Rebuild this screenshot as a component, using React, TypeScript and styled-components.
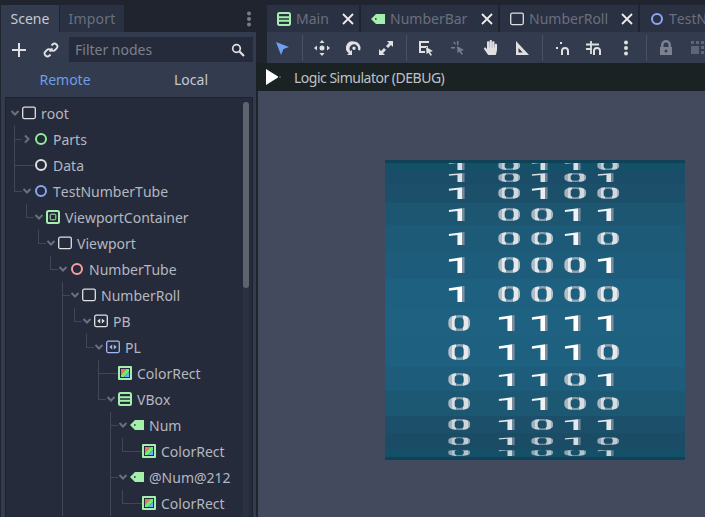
import React from "react";
import styled, { createGlobalStyle } from "styled-components";
import { FaHandPaper } from "react-icons/fa";

const GlobalStyle = createGlobalStyle`
  html, body {
    margin: 0;
    height: 100%;
    overflow: hidden;
    background: #20242f;
  }
  #root { height: 100%; }
`;

const Editor = styled.div`
  display: flex;
  width: 705px;
  height: 517px;
  overflow: hidden;
  font-family: "Noto Sans", sans-serif;
  font-size: 14px;
  color: #c6c9d0;
`;

const Dock = styled.div`
  width: 255px;
  margin-left: 1px;
  flex: none;
  display: flex;
  flex-direction: column;
`;

const DockTabs = styled.div`
  height: 32px;
  padding-top: 5px;
  box-sizing: border-box;
  display: flex;
  align-items: stretch;
  gap: 1px;
`;

const DockTab = styled.div<{ $active?: boolean }>`
  width: ${(p) => (p.$active ? "58px" : "64px")};
  display: flex;
  align-items: center;
  justify-content: center;
  background: ${(p) => (p.$active ? "#333b4f" : "#2a3142")};
  color: ${(p) => (p.$active ? "#c6c9d0" : "#6a6f7e")};
  letter-spacing: ${(p) => (p.$active ? "0" : "0.2px")};
`;

const DockMenu = styled.div`
  margin-left: auto;
  margin-right: 2px;
  width: 10px;
  display: flex;
  align-items: center;
  justify-content: center;
`;

const DockBody = styled.div`
  flex: 1;
  min-height: 0;
  background: #333b4f;
  display: flex;
  flex-direction: column;
`;

const SearchRow = styled.div`
  height: 25px;
  margin-top: 5px;
  padding-left: 10px;
  display: flex;
  align-items: center;
`;

const PlainIcon = styled.div<{ $gap: number }>`
  width: 16px;
  margin-right: ${(p) => p.$gap}px;
  flex: none;
  display: flex;
  align-items: center;
  justify-content: center;
`;

const FilterBox = styled.div`
  width: 184px;
  height: 25px;
  padding: 0 8px 0 6px;
  box-sizing: border-box;
  background: #252b3a;
  color: #7b808e;
  display: flex;
  align-items: center;
  justify-content: space-between;
`;

const Switcher = styled.div`
  height: 35px;
  padding-left: 1px;
  display: grid;
  grid-template-columns: 126px 126px;
  align-items: center;
  text-align: center;
`;

const SwitchLabel = styled.div<{ $active?: boolean }>`
  color: ${(p) => (p.$active ? "#6d9fe8" : "#c6c9d0")};
`;

const TreePanel = styled.div`
  position: relative;
  flex: 1;
  min-height: 0;
  margin: 0 3px 0 4px;
  padding-top: 2px;
  background: #252b3a;
  border: 1px solid #1e222d;
  border-bottom: none;
  overflow: hidden;
`;

const ScrollTrack = styled.div`
  position: absolute;
  top: 4px;
  right: 3px;
  bottom: 0;
  width: 6px;
  background: #2b3140;
  border-radius: 3px;
`;

const ScrollThumb = styled.div`
  width: 6px;
  height: 186px;
  background: #5e636f;
  border-radius: 3px;
`;

const TreeRow = styled.div<{ $depth: number }>`
  position: relative;
  height: 26px;
  padding-left: ${(p) => 16 + p.$depth * 12}px;
  display: flex;
  align-items: center;
  white-space: nowrap;
  color: #b4b7c0;
  font-kerning: none;
`;

const ArrowSlot = styled.div`
  position: absolute;
  margin-left: -12px;
  width: 10px;
  height: 10px;
  display: flex;
`;

const IconSlot = styled.div`
  width: 14px;
  height: 14px;
  margin-right: 5px;
  flex: none;
  display: flex;
`;

const GuideV = styled.div<{ $col: number; $half?: boolean }>`
  position: absolute;
  left: ${(p) => 8 + p.$col * 12}px;
  top: 0;
  width: 1px;
  height: ${(p) => (p.$half ? "14px" : "26px")};
  background: #414756;
`;

const GuideH = styled.div<{ $col: number; $len: number }>`
  position: absolute;
  left: ${(p) => 9 + p.$col * 12}px;
  top: 13px;
  width: ${(p) => p.$len}px;
  height: 1px;
  background: #414756;
`;

const Main = styled.div`
  flex: 1;
  min-width: 0;
  display: flex;
  flex-direction: column;
`;

const Tabs = styled.div`
  height: 32px;
  padding: 5px 0 0 11px;
  box-sizing: border-box;
  display: flex;
  align-items: stretch;
  gap: 2px;
  overflow: hidden;
`;

const FileTab = styled.div<{ $w: number }>`
  width: ${(p) => p.$w}px;
  flex: none;
  background: #2a3142;
  color: #6a6f7e;
  display: flex;
  align-items: center;
  padding-left: 10px;
  box-sizing: border-box;
  white-space: nowrap;
  font-kerning: none;
`;

const TabIcon = styled.div`
  width: 14px;
  height: 14px;
  margin-right: 5px;
  flex: none;
  display: flex;
`;

const CloseMark = styled.div`
  margin-left: auto;
  margin-right: 5px;
  display: flex;
`;

const Toolbar = styled.div`
  height: 31px;
  margin-left: 11px;
  background: #333b4f;
  display: flex;
  align-items: center;
  gap: 2px;
  overflow: hidden;
`;

const ToolButton = styled.div`
  width: 30px;
  flex: none;
  display: flex;
  align-items: center;
  justify-content: center;
`;

const ToolSep = styled.div`
  width: 1px;
  height: 26px;
  margin: 0 2.5px;
  flex: none;
  background: #4a5164;
`;

const DebugBar = styled.div`
  height: 28px;
  padding-left: 10px;
  background: #1a2224;
  display: flex;
  align-items: center;
  gap: 13px;
  color: #bfc3c9;
  letter-spacing: -0.5px;
`;

const Viewport = styled.div`
  flex: 1;
  margin-left: 2px;
  padding: 69px 0 0 127px;
  background: #444a5e;
`;

const Tube = styled.div`
  position: relative;
  width: 300px;
  height: 300px;
  overflow: hidden;
  background: #0f4257;
`;

const EdgeStrip = styled.div<{ $bottom?: boolean }>`
  position: absolute;
  left: 0;
  right: 0;
  height: 3px;
  background: #0f4257;
  ${(p) => (p.$bottom ? "bottom: 0;" : "top: 0;")}
`;

const TubeRow = styled.div<{ $slot: number; $bg: string }>`
  height: ${(p) => p.$slot}px;
  background: ${(p) => p.$bg};
  padding-left: 58px;
  display: flex;
  align-items: center;
`;

const DigitCell = styled.div`
  width: 33px;
  height: 1px;
  flex: none;
  display: flex;
  align-items: center;
  justify-content: center;
  &:first-child { margin-right: 17px; }
`;

const Digit = styled.span<{ $h: number; $one: boolean }>`
  display: inline-block;
  font-family: Roboto, sans-serif;
  font-weight: 700;
  font-size: 22px;
  line-height: 17px;
  transform: scale(${(p) => (p.$one ? 2.3 : 2.05)}, ${(p) => p.$h / 16});
  opacity: ${(p) => 0.62 + (0.38 * p.$h) / 16};
  color: transparent;
  background: ${(p) =>
    p.$one
      ? "linear-gradient(90deg, #ffffff 0 58%, #7f8f9f 58% 100%)"
      : "linear-gradient(90deg, #b4bdc6 0 20%, #e6e9ec 20% 36%, #8fa0ae 36% 64%, #e6e9ec 64% 80%, #b4bdc6 80% 100%)"};
  -webkit-background-clip: text;
  background-clip: text;
`;

type Kind = "rect" | "green" | "white" | "blue" | "red" | "viewport" | "split" | "splitBlue" | "color" | "vbox" | "tag";

const Frame = ({ stroke }: { stroke: string }) => (
  <rect x="0.7" y="1.2" width="12.6" height="11.4" rx="1.5" fill="none" stroke={stroke} strokeWidth="1.3" />
);

function NodeIcon({ kind }: { kind: Kind }) {
  const ring = (c: string) => <circle cx="7" cy="7" r="5" fill="none" stroke={c} strokeWidth="2" />;
  return (
    <svg width="14" height="14" viewBox="0 0 14 14">
      {kind === "rect" && <Frame stroke="#e0e0e0" />}
      {kind === "green" && ring("#8eef97")}
      {kind === "white" && ring("#e0e0e0")}
      {kind === "blue" && ring("#8da5f3")}
      {kind === "red" && ring("#fc9c9c")}
      {kind === "viewport" && (
        <>
          <rect x="1" y="1" width="12" height="12" rx="1.5" fill="none" stroke="#a5efac" strokeWidth="2" />
          <rect x="4.2" y="4.2" width="5.6" height="5.6" rx="1" fill="none" stroke="#a5efac" strokeWidth="1" />
        </>
      )}
      {(kind === "split" || kind === "splitBlue") && (
        <>
          <Frame stroke={kind === "split" ? "#e0e0e0" : "#a5b7f3"} />
          <path d="M6.200 4.500v5L3.200 7zM7.800 4.500v5l3-2.500z" fill={kind === "split" ? "#e0e0e0" : "#a5b7f3"} />
        </>
      )}
      {kind === "color" && (
        <>
          <rect x="0" y="0" width="14" height="14" rx="1" fill="#a5efac" />
          <rect x="2" y="2" width="10" height="10" fill="#252b3a" />
          <path d="M3 3h5.500L3 8.500z" fill="#ff6a6a" />
          <path d="M11 3v3L6 11H3V8.500L8.500 3z" fill="#6af06a" />
          <path d="M11 6V11H6z" fill="#6ab4ff" />
        </>
      )}
      {kind === "vbox" && (
        <>
          <rect x="1" y="1" width="12" height="12" rx="1.5" fill="none" stroke="#a5efac" strokeWidth="2" />
          <path d="M1 5.200h12M1 8.800h12" stroke="#a5efac" strokeWidth="2" />
        </>
      )}
      {kind === "tag" && <path d="M0 7l5-5h9v10H5zM4 6.200v1.600h1.600V6.200z" fill="#a5efac" fillRule="evenodd" />}
    </svg>
  );
}

const Chevron = ({ closed }: { closed?: boolean }) => (
  <svg width="10" height="10" viewBox="0 0 10 10">
    <path
      d={closed ? "M3 1.500L6.500 5 3 8.500" : "M1.500 3L5 6.500 8.500 3"}
      fill="none"
      stroke="#6b7080"
      strokeWidth="2"
    />
  </svg>
);

const CloseIcon = () => (
  <svg width="12" height="12" viewBox="0 0 12 12">
    <path d="M1 1l10 10M11 1L1 11" stroke="#ececec" strokeWidth="1.800" />
  </svg>
);

const Dots = ({ color }: { color: string }) => (
  <svg width="6" height="16" viewBox="0 0 6 16">
    <circle cx="3" cy="2.500" r="2" fill={color} />
    <circle cx="3" cy="8" r="2" fill={color} />
    <circle cx="3" cy="13.500" r="2" fill={color} />
  </svg>
);

const Tool = ({ d, fill = "#e0e0e0" }: { d: string; fill?: string }) => (
  <svg width="16" height="16" viewBox="0 0 16 16">
    <path d={d} fill={fill} fillRule="evenodd" />
  </svg>
);

type Row = {
  name: string;
  depth: number;
  kind: Kind;
  arrow?: "open" | "closed";
  through?: number[];
  last?: boolean;
  elbow?: number;
};

const rows: Row[] = [
  { name: "root", depth: 0, kind: "rect", arrow: "open" },
  { name: "Parts", depth: 1, kind: "green", arrow: "closed", elbow: 7 },
  { name: "Data", depth: 1, kind: "white", elbow: 19 },
  { name: "TestNumberTube", depth: 1, kind: "blue", arrow: "open", elbow: 7, last: true },
  { name: "ViewportContainer", depth: 2, kind: "viewport", arrow: "open", elbow: 7, last: true },
  { name: "Viewport", depth: 3, kind: "rect", arrow: "open", elbow: 7, last: true },
  { name: "NumberTube", depth: 4, kind: "red", arrow: "open", elbow: 7, last: true },
  { name: "NumberRoll", depth: 5, kind: "rect", arrow: "open", elbow: 7 },
  { name: "PB", depth: 6, kind: "split", arrow: "open", elbow: 7, last: true, through: [4] },
  { name: "PL", depth: 7, kind: "splitBlue", arrow: "open", elbow: 7, last: true, through: [4] },
  { name: "ColorRect", depth: 8, kind: "color", elbow: 19, through: [4] },
  { name: "VBox", depth: 8, kind: "vbox", arrow: "open", elbow: 7, last: true, through: [4] },
  { name: "Num", depth: 9, kind: "tag", arrow: "open", elbow: 7, through: [4] },
  { name: "ColorRect", depth: 10, kind: "color", elbow: 19, last: true, through: [4, 8] },
  { name: "@Num@212", depth: 9, kind: "tag", arrow: "open", elbow: 7, through: [4] },
  { name: "ColorRect", depth: 10, kind: "color", elbow: 19, last: true, through: [4, 8] },
];

const tubeRows = [
  { bits: "10110", slot: 11, h: 9, bg: "#155069" },
  { bits: "10101", slot: 13, h: 9, bg: "#1b4d68" },
  { bits: "10100", slot: 19, h: 12, bg: "#1c4f6a" },
  { bits: "10011", slot: 22, h: 13, bg: "#1d5671" },
  { bits: "10010", slot: 26, h: 14, bg: "#1d5a77" },
  { bits: "10001", slot: 28, h: 16, bg: "#1d5d7b" },
  { bits: "10000", slot: 30, h: 16, bg: "#1e607f" },
  { bits: "01111", slot: 28, h: 16, bg: "#1e6180" },
  { bits: "01110", slot: 30, h: 16, bg: "#1e607f" },
  { bits: "01101", slot: 24, h: 14, bg: "#1d5c7a" },
  { bits: "01100", slot: 25, h: 13, bg: "#1d5873" },
  { bits: "01011", slot: 17, h: 11, bg: "#1c4f69" },
  { bits: "01010", slot: 16, h: 8, bg: "#1b4c66" },
  { bits: "01001", slot: 8, h: 6, bg: "#155069" },
  { bits: "01000", slot: 3, h: 3, bg: "#155069" },
];

const tabs: { name: string; kind: Kind; w: number }[] = [
  { name: "Main", kind: "vbox", w: 92 },
  { name: "NumberBar", kind: "tag", w: 137 },
  { name: "NumberRoll", kind: "rect", w: 138 },
  { name: "TestNumberTube", kind: "blue", w: 180 },
];

export default function App() {
  return (
    <>
      <GlobalStyle />
      <Editor>
        <Dock>
          <DockTabs>
            <DockTab $active>Scene</DockTab>
            <DockTab>Import</DockTab>
            <DockMenu>
              <Dots color="#777c89" />
            </DockMenu>
          </DockTabs>
          <DockBody>
            <SearchRow>
              <PlainIcon $gap={16}>
                <Tool d="M7 1h2v6h6v2H9v6H7V9H1V7h6z" />
              </PlainIcon>
              <PlainIcon $gap={10}>
                <svg width="16" height="16" viewBox="0 0 16 16">
                  <path
                    d="M6.500 9.500l3-3M8.500 3.500l1-1a2.800 2.800 0 014 4l-1.500 1.500a2.800 2.800 0 01-4 0M7.500 12.500l-1 1a2.800 2.800 0 01-4-4L4 8a2.800 2.800 0 014 0"
                    fill="none"
                    stroke="#e0e0e0"
                    strokeWidth="1.800"
                  />
                </svg>
              </PlainIcon>
              <FilterBox>
                Filter nodes
                <svg width="14" height="14" viewBox="0 0 14 14">
                  <circle cx="5.500" cy="5.500" r="3.800" fill="none" stroke="#e0e0e0" strokeWidth="1.700" />
                  <path d="M8.500 8.500l4.500 4.500" stroke="#e0e0e0" strokeWidth="2.200" />
                </svg>
              </FilterBox>
            </SearchRow>
            <Switcher>
              <SwitchLabel $active>Remote</SwitchLabel>
              <SwitchLabel>Local</SwitchLabel>
            </Switcher>
            <TreePanel>
              <ScrollTrack>
                <ScrollThumb />
              </ScrollTrack>
              {rows.map((row, i) => (
                <TreeRow key={i} $depth={row.depth}>
                  {row.through?.map((c) => <GuideV key={c} $col={c} />)}
                  {row.depth > 0 && <GuideV $col={row.depth - 1} $half={row.last} />}
                  {row.elbow && <GuideH $col={row.depth - 1} $len={row.elbow} />}
                  {row.arrow && (
                    <ArrowSlot>
                      <Chevron closed={row.arrow === "closed"} />
                    </ArrowSlot>
                  )}
                  <IconSlot>
                    <NodeIcon kind={row.kind} />
                  </IconSlot>
                  {row.name}
                </TreeRow>
              ))}
            </TreePanel>
          </DockBody>
        </Dock>
        <Main>
          <Tabs>
            {tabs.map((tab) => (
              <FileTab key={tab.name} $w={tab.w}>
                <TabIcon>
                  <NodeIcon kind={tab.kind} />
                </TabIcon>
                {tab.name}
                <CloseMark>
                  <CloseIcon />
                </CloseMark>
              </FileTab>
            ))}
          </Tabs>
          <Toolbar>
            <ToolButton>
              <Tool d="M2 2l13 5-5.500 2L7 15z" fill="#6ea0ee" />
            </ToolButton>
            <ToolSep />
            <ToolButton>
              <Tool d="M8 0l2.500 3h-5zM8 16l-2.500-3h5zM0 8l3-2.500v5zM16 8l-3 2.500v-5zM8 5.500a2.500 2.500 0 110 5 2.500 2.500 0 010-5z" />
            </ToolButton>
            <ToolButton>
              <Tool d="M8 1.500a6.500 6.500 0 016 9l-2-.8a4.300 4.300 0 10-7.500 1.600L6 10v5H1l1.800-1.800A6.500 6.500 0 018 1.500zM8 6.500a1.700 1.700 0 110 3.400 1.700 1.700 0 010-3.400z" />
            </ToolButton>
            <ToolButton>
              <Tool d="M9 1h6v6l-2-2-3 3-2-2 3-3zM7 15H1V9l2 2 3-3 2 2-3 3z" />
            </ToolButton>
            <ToolSep />
            <ToolButton>
              <Tool d="M1 1h10v2H3v3h7v2H3v3h4v2H1zM8 7l7 4-3 1 2 3-1.500.8-2-3L8.500 14z" />
            </ToolButton>
            <ToolButton>
              <Tool d="M1 7h4v1.500H1zM7 1h1.500v4H7zM7 6l7 4-3 1 2 3-1.500.8-2-3L7.500 13zM3 2.500l1-1 2 2-1 1z" fill="#777d8b" />
            </ToolButton>
            <ToolButton>
              <FaHandPaper size={15} color="#e0e0e0" />
            </ToolButton>
            <ToolButton>
              <Tool d="M2 1l13 14H2zM4.500 8v4.500h4.200z" />
            </ToolButton>
            <ToolSep />
            <ToolButton>
              <svg width="16" height="16" viewBox="0 0 16 16">
                <path d="M8 15v-4a3 3 0 016 0v4" fill="none" stroke="#e0e0e0" strokeWidth="2" />
                <path d="M2 7h2v2H2zM6 2h2v2H6z" fill="#e0e0e0" />
              </svg>
            </ToolButton>
            <ToolButton>
              <svg width="16" height="16" viewBox="0 0 16 16">
                <path d="M8 15v-4a3 3 0 016 0v4" fill="none" stroke="#e0e0e0" strokeWidth="2" />
                <path d="M5 1v13M0 4.500h13M0 9h5" fill="none" stroke="#e0e0e0" strokeWidth="1.800" />
              </svg>
            </ToolButton>
            <ToolButton>
              <Dots color="#e0e0e0" />
            </ToolButton>
            <ToolSep />
            <ToolButton>
              <Tool d="M3 7V5a5 5 0 0110 0v2h1v8H2V7zM5.500 7h5V5a2.500 2.500 0 00-5 0zM8 9.500a1.500 1.500 0 110 3 1.500 1.500 0 010-3z" fill="#7b8190" />
            </ToolButton>
            <ToolButton>
              <Tool d="M1 1h3v3H1zM6 1h3v3H6zM11 1h3v3h-3zM1 6h8v8H1zM11 6h3v3h-3zM11 11h3v3h-3z" fill="#5f6574" />
            </ToolButton>
          </Toolbar>
          <DebugBar>
            <svg width="15" height="16" viewBox="0 0 15 16">
              <path d="M0 0l12 7.500v1L0 16z" fill="#ffffff" />
              <circle cx="14" cy="8" r="0.600" fill="#ffffff" />
            </svg>
            Logic Simulator (DEBUG)
          </DebugBar>
          <Viewport>
            <Tube>
              {tubeRows.map((row) => (
                <TubeRow key={row.bits} $slot={row.slot} $bg={row.bg}>
                  {row.bits.split("").map((bit, i) => (
                    <DigitCell key={i}>
                      <Digit $h={row.h} $one={bit === "1"}>
                        {bit}
                      </Digit>
                    </DigitCell>
                  ))}
                </TubeRow>
              ))}
              <EdgeStrip />
              <EdgeStrip $bottom />
            </Tube>
          </Viewport>
        </Main>
      </Editor>
    </>
  );
}
